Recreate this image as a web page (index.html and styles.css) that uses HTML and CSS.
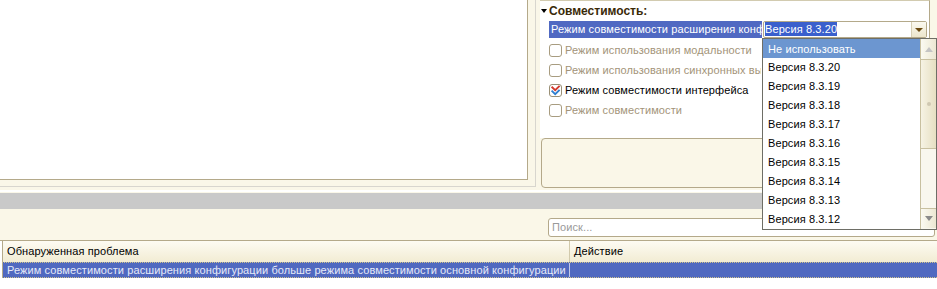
FILE: index.html
```html
<!DOCTYPE html>
<html lang="ru">
<head>
<meta charset="utf-8">
<title>Совместимость</title>
<link rel="stylesheet" href="styles.css">
</head>
<body>
<div class="app">
  <div class="top">
    <div class="left-frame"><div class="left-pane"></div></div>
    <div class="right-col">
      <div class="props">
        <div class="group-head"><span class="tri"></span><span class="group-title">Совместимость:</span></div>
        <div class="prop-row">
          <div class="prop-label">Режим совместимости расширения конф</div>
          <div class="combo">
            <div class="combo-text"><span class="combo-sel">Версия 8.3.20</span></div>
            <div class="combo-btn"><span class="combo-tri"></span></div>
          </div>
        </div>
        <div class="check-row dis"><span class="cb"></span><span class="ct">Режим использования модальности</span></div>
        <div class="check-row dis"><span class="cb"></span><span class="ct">Режим использования синхронных вы</span></div>
        <div class="check-row"><span class="cb on"><svg viewBox="0 0 11 11" width="11" height="11"><path d="M1.6 1.8 L5.2 5.2 L9.6 0.9" fill="none" stroke="#D23A2E" stroke-width="1.9"/><path d="M1.6 5.6 L5.2 9.2 L9.6 4.9" fill="none" stroke="#2F7FD0" stroke-width="1.9"/></svg></span><span class="ct">Режим совместимости интерфейса</span></div>
        <div class="check-row dis"><span class="cb"></span><span class="ct">Режим совместимости</span></div>
      </div>
      <div class="note-box"></div>
    </div>
  </div>
  <div class="split"></div>
  <div class="search-area"><div class="search">Поиск...</div></div>
  <div class="table">
    <div class="thead">
      <div class="th c1">Обнаруженная проблема</div>
      <div class="th c2">Действие</div>
    </div>
    <div class="trow">
      <div class="td c1">Режим совместимости расширения конфигурации больше режима совместимости основной конфигурации</div>
      <div class="td c2"></div>
    </div>
  </div>

  <div class="dropdown">
    <div class="items">
      <div class="item hl">Не использовать</div>
      <div class="item">Версия 8.3.20</div>
      <div class="item">Версия 8.3.19</div>
      <div class="item">Версия 8.3.18</div>
      <div class="item">Версия 8.3.17</div>
      <div class="item">Версия 8.3.16</div>
      <div class="item">Версия 8.3.15</div>
      <div class="item">Версия 8.3.14</div>
      <div class="item">Версия 8.3.13</div>
      <div class="item">Версия 8.3.12</div>
    </div>
    <div class="sb">
      <div class="sb-btn up"><span class="arr-up"></span></div>
      <div class="sb-thumb"><span class="grip"></span></div>
      <div class="sb-track"></div>
      <div class="sb-btn down"><span class="arr-down"></span></div>
    </div>
  </div>
</div>
</body>
</html>
```
FILE: styles.css
```css
* { box-sizing: border-box; }
html, body { margin: 0; padding: 0; }
body {
  width: 937px;
  height: 289px;
  overflow: hidden;
  background: #FAF7E8;
  font-family: "Liberation Sans", Arial, sans-serif;
  font-size: 11px;
  letter-spacing: 0.1px;
  color: #000;
}
.app { position: relative; width: 937px; height: 289px; overflow: hidden; }

.top { display: flex; height: 188px; }
.left-frame {
  width: 536px; height: 187px;
  border-right: 1px solid #D8D6CE;
  border-bottom: 1px solid #D8D6CE;
}
.left-pane {
  width: 528px; height: 180px;
  background: #fff;
  border-right: 1px solid #B4A98A;
  border-bottom: 1px solid #B4A98A;
}
.right-col { margin-left: 4px; width: 390px; display: flex; flex-direction: column; }
.props {
  height: 138px;
  background: #fff;
  border-top: 1px solid #D2CBB0;
  border-right: 1px solid #B4A98A;
  overflow: hidden;
}
.note-box {
  margin-left: 1px;
  height: 50px;
  border: 1px solid #B4A98A;
  border-radius: 4px;
  background: #FAF7E8;
}

.group-head { display: flex; align-items: center; height: 19px; padding-left: 1px; }
.tri {
  width: 0; height: 0;
  border-top: 4px solid #000;
  border-left: 3.5px solid transparent;
  border-right: 3.5px solid transparent;
  margin-right: 2px;
}
.group-title { font-weight: bold; font-size: 12px; letter-spacing: 0; color: #3A2A08; }

.prop-row { display: flex; margin-top: 1px; padding-left: 9px; height: 17px; }
.prop-label {
  width: 213px; height: 17px; line-height: 17px;
  background: #5069C2; color: #fff;
  padding-left: 2px;
  white-space: nowrap; overflow: hidden;
}
.combo {
  width: 164px; height: 17px;
  margin-left: 1px;
  border: 1px solid #B4A98A;
  border-radius: 2px;
  background: #fff;
  display: flex;
}
.combo-text { flex: 1; padding-left: 1px; line-height: 15px; white-space: nowrap; overflow: hidden; }
.combo-sel { background: #3A5FCC; color: #fff; display: inline-block; height: 14px; line-height: 14px; }
.combo-btn {
  width: 15px;
  border-left: 1px solid #D6CFB4;
  background: linear-gradient(#FBF9F0, #ECE6CC);
  display: flex; align-items: center; justify-content: center;
}
.combo-tri {
  width: 0; height: 0;
  border-top: 4px solid #6B4A10;
  border-left: 4px solid transparent;
  border-right: 4px solid transparent;
}

.check-row {
  display: flex; align-items: center;
  height: 20px; padding-left: 9px;
  white-space: nowrap;
}
.prop-row + .check-row { margin-top: 2px; }
.ct { max-width: 196px; overflow: hidden; }
.cb {
  flex: none;
  width: 13px; height: 13px;
  border: 1px solid #A89C80;
  border-radius: 3px;
  background: #fff;
  margin-right: 3px;
  display: flex; align-items: center; justify-content: center;
}
.cb.on { border-color: #9A9076; }
.dis .ct { color: #A39479; }

.split { height: 21px; background: linear-gradient(#FAF7E8 0 2px, #FFFFFF 2px 4px, #FAF7E8 4px 5px, #C9C9C9 5px); }

.search-area { height: 31px; padding-top: 9px; padding-left: 548px; }
.search {
  width: 387px; height: 19px;
  border: 1px solid #B4A98A;
  border-radius: 3px;
  background: #fff;
  color: #9A9A9A;
  padding-left: 3px;
  line-height: 17px;
}

.table { border-top: 1px solid #B4A98A; background: #fff; height: 49px; }
.thead, .trow { display: grid; grid-template-columns: 567px 1fr; margin-left: 2px; border-left: 1px solid #B4A98A; }
.thead { height: 21px; background: linear-gradient(#FDFBF3, #F2ECD3); }
.th { line-height: 20px; padding-left: 4px; }
.thead .c1 { border-right: 1px solid #D2CAAC; }
.trow {
  height: 16px;
  background: #5069C0;
  color: #E6EAF8;
  border-top: 1px dotted #CFC28C;
  border-bottom: 1px dotted #CFC28C;
}
.td { line-height: 14px; padding-left: 4px; white-space: nowrap; overflow: hidden; }
.trow .c1 { border-right: 1px solid #C4CBE8; }

.dropdown {
  position: absolute;
  left: 762px; top: 38px;
  width: 175px; height: 192px;
  border: 1px solid #6E6E66;
  background: #fff;
  display: flex;
}
.items { flex: 1; }
.item { height: 19px; line-height: 19px; padding-left: 5px; white-space: nowrap; }
.item:first-child { line-height: 20px; }
.item.hl { background: #6C96D0; color: #fff; }

.sb {
  width: 16px;
  border-left: 1px solid #C8C0A0;
  display: flex; flex-direction: column;
  background: #F9F7EE;
}
.sb-btn {
  height: 21px;
  background: linear-gradient(90deg, #FBFAF2, #ECE7D2);
  display: flex; align-items: center; justify-content: center;
}
.sb-btn.up { border-bottom: 1px solid #C8C0A0; }
.sb-btn.down { height: 20px; border-top: 1px solid #C8C0A0; }
.arr-up {
  width: 0; height: 0;
  border-bottom: 5px solid #C4C4C4;
  border-left: 4px solid transparent;
  border-right: 4px solid transparent;
}
.arr-down {
  width: 0; height: 0;
  border-top: 5px solid #8A8A8A;
  border-left: 4px solid transparent;
  border-right: 4px solid transparent;
}
.sb-thumb {
  height: 89px;
  background: linear-gradient(90deg, #F6F3E4, #E6DFC2);
  border-bottom: 1px solid #C8C0A0;
  display: flex; align-items: center; justify-content: center;
}
.grip { width: 4px; height: 4px; border-radius: 50%; background: #CFC8B2; }
.sb-track { height: 59px; background: #F9F7EE; }
```
